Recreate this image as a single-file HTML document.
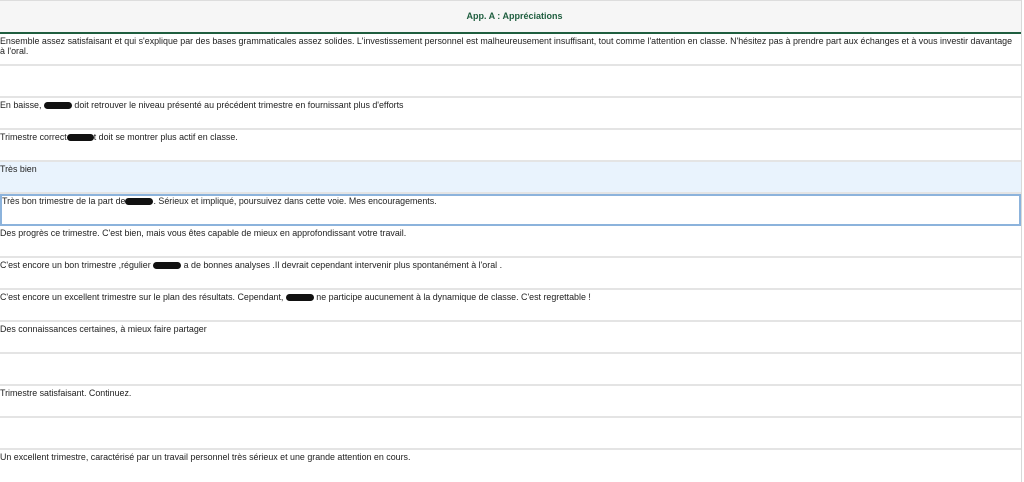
<!DOCTYPE html>
<html><head><meta charset="utf-8"><style>
*{margin:0;padding:0;box-sizing:border-box}
body{width:1024px;height:482px;overflow:hidden;background:#fff;font-family:"Liberation Sans",sans-serif;font-size:8.9px;color:#222;position:relative}
.wrap{position:absolute;left:0;top:0;width:1022px;height:482px;border-right:1px solid #d8d8d8}
.hdr{height:34px;background:#f6f6f6;border-top:1px solid #ddd;border-bottom:2px solid #1f5e3f;text-align:center;font-weight:bold;color:#1f5e3f;font-size:9px;line-height:31px;padding-left:8px}
.row{height:32px;border-bottom:2px solid #e4e4e4;padding:2px 6px 0 0;line-height:10px;position:relative}
.hl{background:#e9f3fd}
.sel{border:2px solid #8cb3dc}
.blot{display:inline-block;background:#111;border-radius:5px;height:7px;vertical-align:-1px}
</style></head><body><div class="wrap">
<div class="hdr">App. A : Appréciations</div>
<div class="row">Ensemble assez satisfaisant et qui s'explique par des bases grammaticales assez solides. L'investissement personnel est malheureusement insuffisant, tout comme l'attention en classe. N'hésitez pas à prendre part aux échanges et à vous investir davantage<br>à l'oral.</div>
<div class="row"></div>
<div class="row">En baisse, <span class="blot" style="width:28px"></span> doit retrouver le niveau présenté au précédent trimestre en fournissant plus d'efforts</div>
<div class="row">Trimestre correct<span class="blot" style="width:27px"></span>t doit se montrer plus actif en classe.</div>
<div class="row hl">Très bien</div>
<div class="row sel" style="padding-top:0">Très bon trimestre de la part de<span class="blot" style="width:28px"></span>. Sérieux et impliqué, poursuivez dans cette voie. Mes encouragements.</div>
<div class="row">Des progrès ce trimestre. C'est bien, mais vous êtes capable de mieux en approfondissant votre travail.</div>
<div class="row">C'est encore un bon trimestre ,régulier <span class="blot" style="width:28px"></span> a de bonnes analyses .Il devrait cependant intervenir plus spontanément à l'oral .</div>
<div class="row">C'est encore un excellent trimestre sur le plan des résultats. Cependant, <span class="blot" style="width:28px"></span> ne participe aucunement à la dynamique de classe. C'est regrettable !</div>
<div class="row">Des connaissances certaines, à mieux faire partager</div>
<div class="row"></div>
<div class="row">Trimestre satisfaisant. Continuez.</div>
<div class="row"></div>
<div class="row" style="border-bottom:none">Un excellent trimestre, caractérisé par un travail personnel très sérieux et une grande attention en cours.</div>
</div></body></html>
